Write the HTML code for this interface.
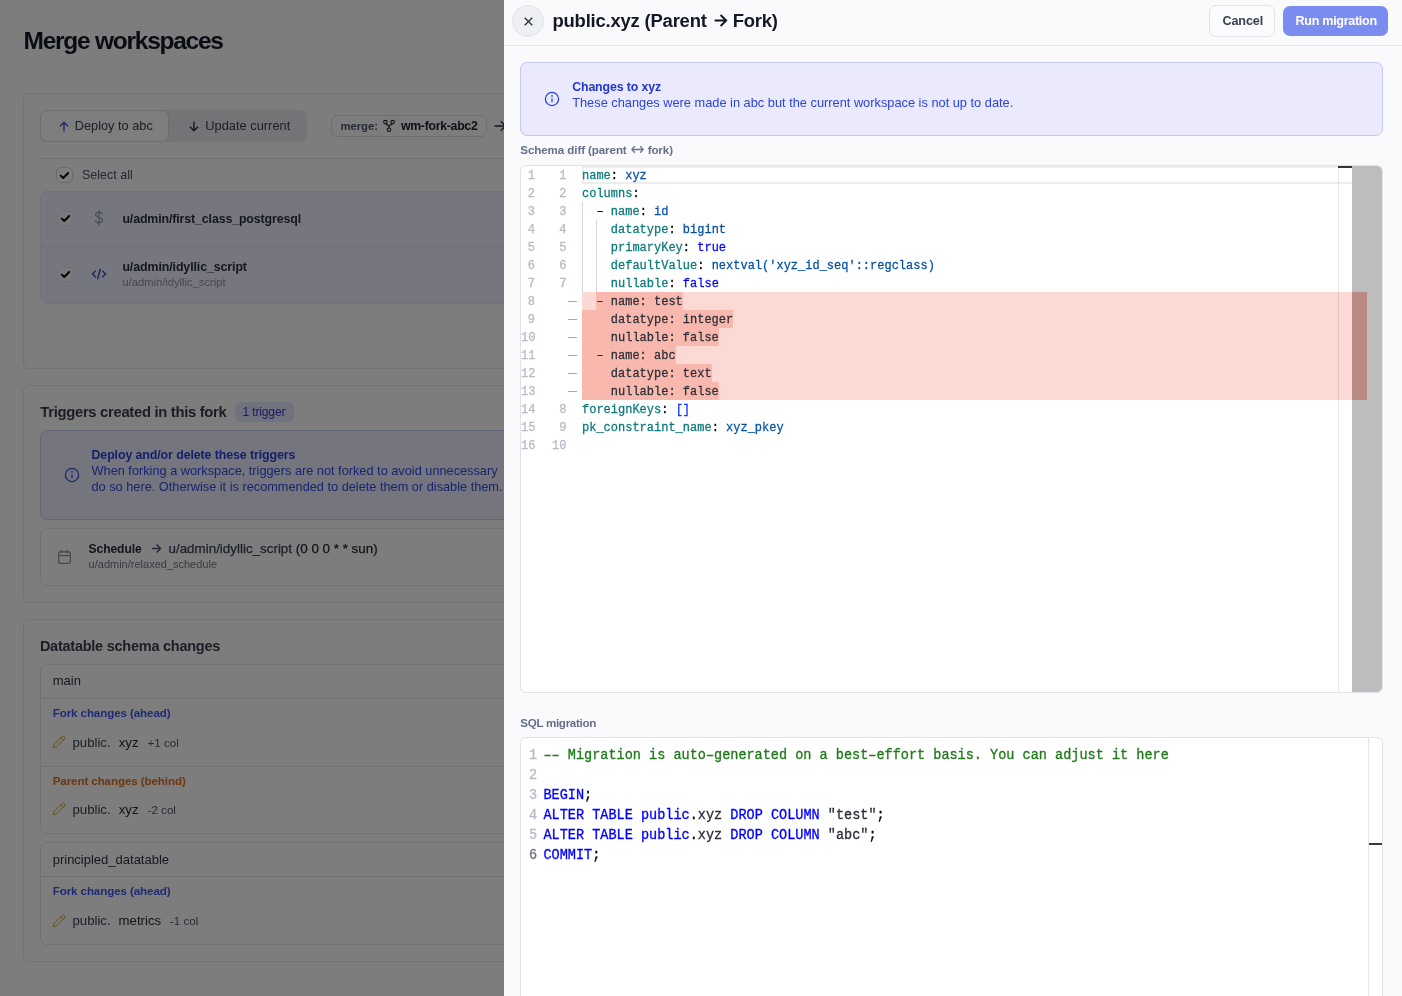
<!DOCTYPE html>
<html><head><meta charset="utf-8">
<style>
*{box-sizing:border-box;margin:0;padding:0}
html,body{width:1402px;height:996px;overflow:hidden}
body{font-family:"Liberation Sans",sans-serif;background:#fbfbfd;position:relative;color:#1f2937}
.abs{position:absolute}
.t{position:absolute;white-space:nowrap;line-height:normal}
.page{position:absolute;left:0;top:0;width:1402px;height:996px;will-change:transform}
.overlay{position:absolute;left:0;top:0;width:504px;height:996px;background:rgba(0,0,0,0.5)}
.drawer{position:absolute;left:504px;top:0;width:898px;height:996px;background:#fafafc;overflow:hidden;will-change:transform}
.ed{position:absolute;background:#fff;border:1px solid #e1e2e7;border-radius:6px;overflow:hidden}
.ln{position:absolute;font-family:"Liberation Mono",monospace;font-size:12px;line-height:18px;height:18px;text-align:right;color:#b5bbc5;white-space:nowrap;-webkit-text-stroke:0.3px}
.cl{position:absolute;left:61px;font-family:"Liberation Mono",monospace;font-size:12px;line-height:18px;height:18px;white-space:pre;-webkit-text-stroke:0.25px;transform:scaleY(1.06);transform-origin:0 12px}
.sln{position:absolute;left:8px;font-family:"Liberation Mono",monospace;font-size:13.54px;line-height:20px;height:20px;white-space:nowrap;-webkit-text-stroke:0.3px;transform:scaleY(1.1);transform-origin:0 14px}
.scl{position:absolute;left:22.5px;font-family:"Liberation Mono",monospace;font-size:13.54px;line-height:20px;height:20px;white-space:pre;-webkit-text-stroke:0.3px;transform:scaleY(1.1);transform-origin:0 14px}
</style></head>
<body>
<div class="page">
<div class="t" style="left:23.5px;top:27px;font-size:24.5px;color:#131826;font-weight:bold;letter-spacing:-1.25px;">Merge workspaces</div>
<div class="abs" style="left:23px;top:93px;width:900px;height:276px;border:1px solid #e4e4ea;border-radius:6px"></div>
<div class="abs" style="left:40px;top:110px;width:267px;height:32px;background:#e8e8ee;border-radius:7px"></div>
<div class="abs" style="left:40px;top:110px;width:129px;height:32px;background:#fcfcfe;border:1px solid #d9d9e0;border-radius:7px"></div>
<svg class="abs" style="left:59px;top:120.5px" width="10" height="11" viewBox="0 0 10 11"><path d="M5 10.5V1.2M1 5.2L5 1.2l4 4" stroke="#3b55d6" stroke-width="1.4" fill="none"/></svg>
<div class="t" style="left:74.8px;top:118px;font-size:12.75px;color:#3a4150;">Deploy to abc</div>
<svg class="abs" style="left:189px;top:120.5px" width="10" height="11" viewBox="0 0 10 11"><path d="M5 0.5v9.3M1 5.8l4 4 4-4" stroke="#2a2f3b" stroke-width="1.4" fill="none"/></svg>
<div class="t" style="left:205.3px;top:118px;font-size:12.85px;color:#3a4150;">Update current</div>
<div class="abs" style="left:331px;top:115px;width:156px;height:22px;border:1px solid #dcdde3;border-radius:6px"></div>
<div class="t" style="left:340.5px;top:120px;font-size:11.4px;color:#4b5568;font-weight:bold;letter-spacing:-0.1px;">merge:</div>
<svg class="abs" style="left:382px;top:119px" width="14" height="14" viewBox="0 0 14 14"><g fill="none" stroke="#1f2430" stroke-width="1.15"><circle cx="3.4" cy="3.1" r="1.75"/><circle cx="10.6" cy="3.1" r="1.75"/><circle cx="6.95" cy="10.7" r="1.75"/><path d="M3.9 4.8L6.95 7.2 10.1 4.8M6.95 7.2v1.8"/></g></svg>
<div class="t" style="left:400.9px;top:119px;font-size:12.3px;color:#1a1f2c;font-weight:bold;letter-spacing:-0.28px;">wm-fork-abc2</div>
<svg class="abs" style="left:494px;top:120px" width="13" height="12" viewBox="0 0 13 12"><path d="M0.5 6h11M6.8 1.3L11.5 6l-4.7 4.7" stroke="#2a2f3a" stroke-width="1.4" fill="none"/></svg>
<div class="abs" style="left:40px;top:158px;width:900px;height:1px;background:#e0e0e7"></div>
<div class="abs" style="left:56px;top:167px;width:17px;height:16px;background:#fcfcfe;border:1px solid #d6d6de;border-radius:5px"></div>
<svg class="abs" style="left:59px;top:169.5px" width="11" height="11" viewBox="0 0 11 11"><path d="M1.8 5.6l2.4 2.4L9.2 3" stroke="#000" stroke-width="1.9" fill="none" stroke-linecap="round" stroke-linejoin="round"/></svg>
<div class="t" style="left:82px;top:168px;font-size:12.5px;color:#465064;">Select all</div>
<div class="abs" style="left:40px;top:191px;width:900px;height:113px;background:#ececfd;border:1px solid #e2e3f0;border-radius:7px"></div>
<div class="abs" style="left:41px;top:246px;width:900px;height:1px;background:#dedfee"></div>
<div class="abs" style="left:57.5px;top:211.0px;width:16px;height:15px;background:#f4f4f8;border:1px solid #e3e3ea;border-radius:4px"></div>
<svg class="abs" style="left:60px;top:213.0px" width="11" height="11" viewBox="0 0 11 11"><path d="M1.8 5.6l2.4 2.4L9.2 3" stroke="#000" stroke-width="1.9" fill="none" stroke-linecap="round" stroke-linejoin="round"/></svg>
<div class="abs" style="left:57.5px;top:267.0px;width:16px;height:15px;background:#f4f4f8;border:1px solid #e3e3ea;border-radius:4px"></div>
<svg class="abs" style="left:60px;top:269.0px" width="11" height="11" viewBox="0 0 11 11"><path d="M1.8 5.6l2.4 2.4L9.2 3" stroke="#000" stroke-width="1.9" fill="none" stroke-linecap="round" stroke-linejoin="round"/></svg>
<svg class="abs" style="left:93px;top:209px" width="12" height="18" viewBox="0 0 12 18"><path d="M9.3 5.2c-.4-1.3-1.8-2-3.4-2-1.9 0-3.3 1-3.3 2.5 0 3.3 7 1.9 7 5.4 0 1.6-1.5 2.7-3.6 2.7-1.8 0-3.3-.8-3.7-2.3M6 1v16" stroke="#9096a2" stroke-width="1.15" fill="none"/></svg>
<svg class="abs" style="left:91px;top:266px" width="16" height="16" viewBox="0 0 16 16"><path d="M4.8 4.6L1.5 8l3.3 3.4M11.2 4.6L14.5 8l-3.3 3.4M9.4 2.8L6.6 13.2" stroke="#2f46c4" stroke-width="1.35" fill="none"/></svg>
<div class="t" style="left:122.4px;top:212px;font-size:12.4px;color:#2a303c;font-weight:bold;letter-spacing:-0.13px;">u/admin/first_class_postgresql</div>
<div class="t" style="left:122.4px;top:260px;font-size:12.4px;color:#2a303c;font-weight:bold;letter-spacing:-0.1px;">u/admin/idyllic_script</div>
<div class="t" style="left:122.4px;top:276px;font-size:11.2px;color:#8b909c;">u/admin/idyllic_script</div>
<div class="abs" style="left:23px;top:385px;width:900px;height:218px;border:1px solid #e4e4ea;border-radius:6px"></div>
<div class="t" style="left:40.3px;top:404px;font-size:14.8px;color:#363d4b;font-weight:bold;letter-spacing:-0.3px;">Triggers created in this fork</div>
<div class="abs" style="left:235px;top:402px;width:59px;height:20px;background:#e0e5fd;border-radius:6px"></div>
<div class="t" style="left:242.6px;top:405px;font-size:12px;color:#3a33c0;letter-spacing:-0.15px;">1 trigger</div>
<div class="abs" style="left:40px;top:430px;width:900px;height:90px;background:#eaebfc;border:1px solid #c6cbf2;border-radius:7px"></div>
<svg class="abs" style="left:64px;top:467px" width="16" height="16" viewBox="0 0 16 16"><g fill="none" stroke="#3048dc" stroke-width="1.25"><circle cx="8" cy="8" r="6.6"/><path d="M8 7.2v4"/></g><circle cx="8" cy="4.9" r="0.85" fill="#3048dc"/></svg>
<div class="t" style="left:91.5px;top:448px;font-size:12.4px;color:#2a3fd4;font-weight:bold;letter-spacing:-0.1px;">Deploy and/or delete these triggers</div>
<div class="t" style="left:91.5px;top:463px;font-size:12.75px;color:#3048dc;">When forking a workspace, triggers are not forked to avoid unnecessary</div>
<div class="t" style="left:91.5px;top:479px;font-size:12.75px;color:#3048dc;">do so here. Otherwise it is recommended to delete them or disable them.</div>
<div class="abs" style="left:40px;top:528px;width:900px;height:58px;border:1px solid #e2e2e8;border-radius:7px"></div>
<svg class="abs" style="left:57px;top:549px" width="15" height="16" viewBox="0 0 15 16"><g fill="none" stroke="#8b909c" stroke-width="1.2"><rect x="1.6" y="2.8" width="11.8" height="11.6" rx="1.6"/><path d="M1.6 6.6h11.8M4.8 1v3.2M10.2 1v3.2"/></g></svg>
<div class="t" style="left:88.6px;top:542px;font-size:12.1px;color:#262b36;font-weight:bold;letter-spacing:-0.1px;">Schedule</div>
<svg class="abs" style="left:150.5px;top:543px" width="11" height="11" viewBox="0 0 11 11"><path d="M0.8 5.5h8.8M5.6 1.6l3.9 3.9-3.9 3.9" stroke="#4e5568" stroke-width="1.4" fill="none"/></svg>
<div class="t" style="left:168.5px;top:541px;font-size:13.4px;color:#1e2330;-webkit-text-stroke:0.25px"><span style="color:#3a4256">u/admin/idyllic_script</span> (0 0 0 * * sun)</div>
<div class="t" style="left:88.6px;top:558px;font-size:11px;color:#6d7381;">u/admin/relaxed_schedule</div>
<div class="abs" style="left:23px;top:619px;width:900px;height:343px;border:1px solid #e4e4ea;border-radius:6px"></div>
<div class="t" style="left:39.9px;top:638px;font-size:14.5px;color:#363d4b;font-weight:bold;letter-spacing:-0.25px;">Datatable schema changes</div>
<div class="abs" style="left:40px;top:664px;width:900px;height:170px;border:1px solid #e2e2e8;border-radius:7px"></div>
<div class="abs" style="left:41px;top:698px;width:900px;height:1px;background:#e2e2e8"></div>
<div class="abs" style="left:41px;top:766px;width:900px;height:1px;background:#e2e2e8"></div>
<div class="t" style="left:52.7px;top:673px;font-size:13px;color:#2a303c;">main</div>
<div class="t" style="left:52.7px;top:706px;font-size:11.6px;color:#3b57ee;font-weight:bold;letter-spacing:-0.1px;">Fork changes (ahead)</div>
<div class="t" style="left:52.7px;top:774px;font-size:11.6px;color:#dd6a1c;font-weight:bold;letter-spacing:-0.1px;">Parent changes (behind)</div>
<div class="abs" style="left:40px;top:842px;width:900px;height:103px;border:1px solid #e2e2e8;border-radius:7px"></div>
<div class="abs" style="left:41px;top:876px;width:900px;height:1px;background:#e2e2e8"></div>
<div class="t" style="left:52.7px;top:852px;font-size:13px;color:#2a303c;">principled_datatable</div>
<div class="t" style="left:52.7px;top:884px;font-size:11.6px;color:#3b57ee;font-weight:bold;letter-spacing:-0.1px;">Fork changes (ahead)</div>
<svg class="abs" style="left:52.4px;top:735.2px" width="14" height="14" viewBox="0 0 24 24"><path d="M21.174 6.812a1 1 0 0 0-3.986-3.987L3.842 16.174a2 2 0 0 0-.5.83l-1.321 4.352a.5.5 0 0 0 .623.622l4.353-1.32a2 2 0 0 0 .83-.497z M15 5l4 4" stroke="#cc9c18" stroke-width="1.6" fill="none" stroke-linejoin="round" stroke-linecap="round"/></svg>
<div class="t" style="left:72.5px;top:735px;font-size:13.2px;color:#3a4050;">public.</div>
<div class="t" style="left:118.7px;top:735px;font-size:13.2px;color:#262b36;">xyz</div>
<div class="t" style="left:147.6px;top:736px;font-size:11.6px;color:#4e5566;">+1 col</div>
<svg class="abs" style="left:52.4px;top:802.0px" width="14" height="14" viewBox="0 0 24 24"><path d="M21.174 6.812a1 1 0 0 0-3.986-3.987L3.842 16.174a2 2 0 0 0-.5.83l-1.321 4.352a.5.5 0 0 0 .623.622l4.353-1.32a2 2 0 0 0 .83-.497z M15 5l4 4" stroke="#cc9c18" stroke-width="1.6" fill="none" stroke-linejoin="round" stroke-linecap="round"/></svg>
<div class="t" style="left:72.5px;top:802px;font-size:13.2px;color:#3a4050;">public.</div>
<div class="t" style="left:118.7px;top:802px;font-size:13.2px;color:#262b36;">xyz</div>
<div class="t" style="left:147.6px;top:803px;font-size:11.6px;color:#4e5566;">-2 col</div>
<svg class="abs" style="left:52.4px;top:913.6px" width="14" height="14" viewBox="0 0 24 24"><path d="M21.174 6.812a1 1 0 0 0-3.986-3.987L3.842 16.174a2 2 0 0 0-.5.83l-1.321 4.352a.5.5 0 0 0 .623.622l4.353-1.32a2 2 0 0 0 .83-.497z M15 5l4 4" stroke="#cc9c18" stroke-width="1.6" fill="none" stroke-linejoin="round" stroke-linecap="round"/></svg>
<div class="t" style="left:72.5px;top:913px;font-size:13.2px;color:#3a4050;">public.</div>
<div class="t" style="left:118.6px;top:913px;font-size:13.2px;color:#262b36;">metrics</div>
<div class="t" style="left:169.9px;top:914px;font-size:11.6px;color:#4e5566;">-1 col</div>
</div>
<div class="overlay"></div>
<div class="drawer">
<div class="abs" style="left:0px;top:45px;width:898px;height:1px;background:#e4e5ea"></div>
<div class="abs" style="left:8px;top:5px;width:32px;height:32px;border-radius:16px;background:#eeeff3;border:1px solid #e2e3e8"></div>
<svg class="abs" style="left:20.200000000000045px;top:17.2px" width="9" height="9" viewBox="0 0 9 9"><path d="M0.7 0.7l7.6 7.6M8.3 0.7l-7.6 7.6" stroke="#2a303c" stroke-width="1.3"/></svg>
<div class="t" style="left:48.5px;top:10px;font-size:18.44px;color:#131826;font-weight:bold;letter-spacing:-0.2px;">public.xyz (Parent<svg width="14" height="13" viewBox="0 0 14 13" style="margin:0 5px 0 7px;vertical-align:0px"><path d="M0.6 6.5h11.6M6.6 1L12.2 6.5 6.6 12" stroke="#131826" stroke-width="1.9" fill="none"/></svg>Fork)</div>
<div class="abs" style="left:705px;top:5px;width:65.5px;height:32px;border:1px solid #e2e3e8;border-radius:7px;background:#fbfbfd"></div>
<div class="t" style="left:718.4000000000001px;top:14px;font-size:12.6px;color:#3a4150;font-weight:bold;letter-spacing:-0.1px;">Cancel</div>
<div class="abs" style="left:779px;top:6px;width:105px;height:30px;border-radius:7px;background:#7b8cf1"></div>
<div class="t" style="left:791.5999999999999px;top:14px;font-size:12.6px;color:#ffffff;font-weight:bold;letter-spacing:-0.32px;">Run migration</div>
<div class="abs" style="left:16px;top:62px;width:863px;height:74px;border-radius:7px;background:#eaeafc;border:1px solid #c2c8f5"></div>
<svg class="abs" style="left:40px;top:91px" width="16" height="16" viewBox="0 0 16 16"><g fill="none" stroke="#2b44da" stroke-width="1.25"><circle cx="8" cy="8" r="6.6"/><path d="M8 7.2v4"/></g><circle cx="8" cy="4.9" r="0.85" fill="#2b44da"/></svg>
<div class="t" style="left:68.20000000000005px;top:80px;font-size:12.3px;color:#2236cc;font-weight:bold;letter-spacing:-0.1px;">Changes to xyz</div>
<div class="t" style="left:68.20000000000005px;top:95px;font-size:12.8px;color:#2b44da;">These changes were made in abc but the current workspace is not up to date.</div>
<div class="t" style="left:16.299999999999955px;top:143px;font-size:11.6px;color:#64708a;font-weight:bold;letter-spacing:-0.1px;">Schema diff (parent<svg width="13" height="9" viewBox="0 0 13 9" style="margin:0 4px 0 4px;vertical-align:0px"><path d="M0.8 4.5h11.4M3.8 1.2L0.8 4.5l3 3.3M9.2 1.2l3 3.3-3 3.3" stroke="#6b7385" stroke-width="1.3" fill="none"/></svg>fork)</div>
<div class="t" style="left:16.299999999999955px;top:716px;font-size:11.6px;color:#64708a;font-weight:bold;letter-spacing:-0.3px;">SQL migration</div>
<div class="ed" style="left:16px;top:165px;width:863px;height:528px">
<div class="abs" style="left:61px;top:126px;width:786px;height:108px;background:#fbd9d4"></div>
<div class="abs" style="left:75.4px;top:126px;width:86.4px;height:18px;background:#f8b8ad"></div>
<div class="abs" style="left:61.0px;top:144px;width:151.2px;height:18px;background:#f8b8ad"></div>
<div class="abs" style="left:61.0px;top:162px;width:136.8px;height:18px;background:#f8b8ad"></div>
<div class="abs" style="left:61.0px;top:180px;width:93.6px;height:18px;background:#f8b8ad"></div>
<div class="abs" style="left:61.0px;top:198px;width:129.6px;height:18px;background:#f8b8ad"></div>
<div class="abs" style="left:61.0px;top:216px;width:136.8px;height:18px;background:#f8b8ad"></div>
<div class="abs" style="left:61px;top:0px;width:770px;height:18px;border:2px solid #ededed;border-right:none"></div>
<div class="abs" style="left:61px;top:36px;width:1px;height:90px;background:#d6d6d6"></div>
<div class="abs" style="left:75.4px;top:54px;width:1px;height:72px;background:#d6d6d6"></div>
<div class="ln" style="top:1px;left:0;width:14px">1</div>
<div class="ln" style="top:1px;left:25px;width:20.5px">1</div>
<div class="cl" style="top:1px"><span style="color:#0a7a7a">name</span><span style="color:#000000">: </span><span style="color:#0451a5">xyz</span></div>
<div class="ln" style="top:19px;left:0;width:14px">2</div>
<div class="ln" style="top:19px;left:25px;width:20.5px">2</div>
<div class="cl" style="top:19px"><span style="color:#0a7a7a">columns</span><span style="color:#000000">:</span></div>
<div class="ln" style="top:37px;left:0;width:14px">3</div>
<div class="ln" style="top:37px;left:25px;width:20.5px">3</div>
<div class="cl" style="top:37px"><span style="color:#000000">  – </span><span style="color:#0a7a7a">name</span><span style="color:#000000">: </span><span style="color:#0451a5">id</span></div>
<div class="ln" style="top:55px;left:0;width:14px">4</div>
<div class="ln" style="top:55px;left:25px;width:20.5px">4</div>
<div class="cl" style="top:55px"><span style="color:#000000">    </span><span style="color:#0a7a7a">datatype</span><span style="color:#000000">: </span><span style="color:#0451a5">bigint</span></div>
<div class="ln" style="top:73px;left:0;width:14px">5</div>
<div class="ln" style="top:73px;left:25px;width:20.5px">5</div>
<div class="cl" style="top:73px"><span style="color:#000000">    </span><span style="color:#0a7a7a">primaryKey</span><span style="color:#000000">: </span><span style="color:#0000ff">true</span></div>
<div class="ln" style="top:91px;left:0;width:14px">6</div>
<div class="ln" style="top:91px;left:25px;width:20.5px">6</div>
<div class="cl" style="top:91px"><span style="color:#000000">    </span><span style="color:#0a7a7a">defaultValue</span><span style="color:#000000">: </span><span style="color:#0451a5">nextval(&#x27;xyz_id_seq&#x27;::regclass)</span></div>
<div class="ln" style="top:109px;left:0;width:14px">7</div>
<div class="ln" style="top:109px;left:25px;width:20.5px">7</div>
<div class="cl" style="top:109px"><span style="color:#000000">    </span><span style="color:#0a7a7a">nullable</span><span style="color:#000000">: </span><span style="color:#0000ff">false</span></div>
<div class="ln" style="top:127px;left:0;width:14px">8</div>
<div class="abs" style="left:47px;top:135px;width:9px;height:1.3px;background:#a3aab6"></div>
<div class="cl" style="top:127px"><span style="color:#2b2f38">  – name: test</span></div>
<div class="ln" style="top:145px;left:0;width:14px">9</div>
<div class="abs" style="left:47px;top:153px;width:9px;height:1.3px;background:#a3aab6"></div>
<div class="cl" style="top:145px"><span style="color:#2b2f38">    datatype: integer</span></div>
<div class="ln" style="top:163px;left:0;width:14px">10</div>
<div class="abs" style="left:47px;top:171px;width:9px;height:1.3px;background:#a3aab6"></div>
<div class="cl" style="top:163px"><span style="color:#2b2f38">    nullable: false</span></div>
<div class="ln" style="top:181px;left:0;width:14px">11</div>
<div class="abs" style="left:47px;top:189px;width:9px;height:1.3px;background:#a3aab6"></div>
<div class="cl" style="top:181px"><span style="color:#2b2f38">  – name: abc</span></div>
<div class="ln" style="top:199px;left:0;width:14px">12</div>
<div class="abs" style="left:47px;top:207px;width:9px;height:1.3px;background:#a3aab6"></div>
<div class="cl" style="top:199px"><span style="color:#2b2f38">    datatype: text</span></div>
<div class="ln" style="top:217px;left:0;width:14px">13</div>
<div class="abs" style="left:47px;top:225px;width:9px;height:1.3px;background:#a3aab6"></div>
<div class="cl" style="top:217px"><span style="color:#2b2f38">    nullable: false</span></div>
<div class="ln" style="top:235px;left:0;width:14px">14</div>
<div class="ln" style="top:235px;left:25px;width:20.5px">8</div>
<div class="cl" style="top:235px"><span style="color:#0a7a7a">foreignKeys</span><span style="color:#000000">: </span><span style="color:#0431fa">[]</span></div>
<div class="ln" style="top:253px;left:0;width:14px">15</div>
<div class="ln" style="top:253px;left:25px;width:20.5px">9</div>
<div class="cl" style="top:253px"><span style="color:#0a7a7a">pk_constraint_name</span><span style="color:#000000">: </span><span style="color:#0451a5">xyz_pkey</span></div>
<div class="ln" style="top:271px;left:0;width:14px">16</div>
<div class="ln" style="top:271px;left:25px;width:20.5px">10</div>
<div class="cl" style="top:271px"></div>
<div class="abs" style="left:817px;top:0px;width:1px;height:528px;background:rgba(0,0,0,0.1)"></div>
<div class="abs" style="left:817px;top:0px;width:14px;height:2px;background:#333"></div>
<div class="abs" style="left:831px;top:0px;width:31px;height:528px;background:#bdbdbd"></div>
<div class="abs" style="left:831px;top:126px;width:15px;height:108px;background:#ba8a85"></div>
</div>
<div class="ed" style="left:16px;top:737px;width:863px;height:300px">
<div class="sln" style="top:8px;color:#b5bbc5">1</div>
<div class="scl" style="top:8px"><span style="color:#1f7a1a">–– Migration is auto–generated on a best–effort basis. You can adjust it here</span></div>
<div class="sln" style="top:28px;color:#b5bbc5">2</div>
<div class="scl" style="top:28px"></div>
<div class="sln" style="top:48px;color:#b5bbc5">3</div>
<div class="scl" style="top:48px"><span style="color:#0000ff">BEGIN</span><span style="color:#000">;</span></div>
<div class="sln" style="top:68px;color:#b5bbc5">4</div>
<div class="scl" style="top:68px"><span style="color:#0000ff">ALTER</span><span style="color:#000"> </span><span style="color:#0000ff">TABLE</span><span style="color:#000"> </span><span style="color:#0000ff">public</span><span style="color:#000">.</span><span style="color:#2b2f38">xyz</span><span style="color:#000"> </span><span style="color:#0000ff">DROP</span><span style="color:#000"> </span><span style="color:#0000ff">COLUMN</span><span style="color:#000"> </span><span style="color:#2b2f38">&quot;test&quot;</span><span style="color:#000">;</span></div>
<div class="sln" style="top:88px;color:#b5bbc5">5</div>
<div class="scl" style="top:88px"><span style="color:#0000ff">ALTER</span><span style="color:#000"> </span><span style="color:#0000ff">TABLE</span><span style="color:#000"> </span><span style="color:#0000ff">public</span><span style="color:#000">.</span><span style="color:#2b2f38">xyz</span><span style="color:#000"> </span><span style="color:#0000ff">DROP</span><span style="color:#000"> </span><span style="color:#0000ff">COLUMN</span><span style="color:#000"> </span><span style="color:#2b2f38">&quot;abc&quot;</span><span style="color:#000">;</span></div>
<div class="sln" style="top:108px;color:#6b7280">6</div>
<div class="scl" style="top:108px"><span style="color:#0000ff">COMMIT</span><span style="color:#000">;</span></div>
<div class="abs" style="left:847px;top:0px;width:1px;height:300px;background:#e5e5e5"></div>
<div class="abs" style="left:848px;top:105px;width:13px;height:2px;background:#3a3a3a"></div>
</div>
</div>
</body></html>
